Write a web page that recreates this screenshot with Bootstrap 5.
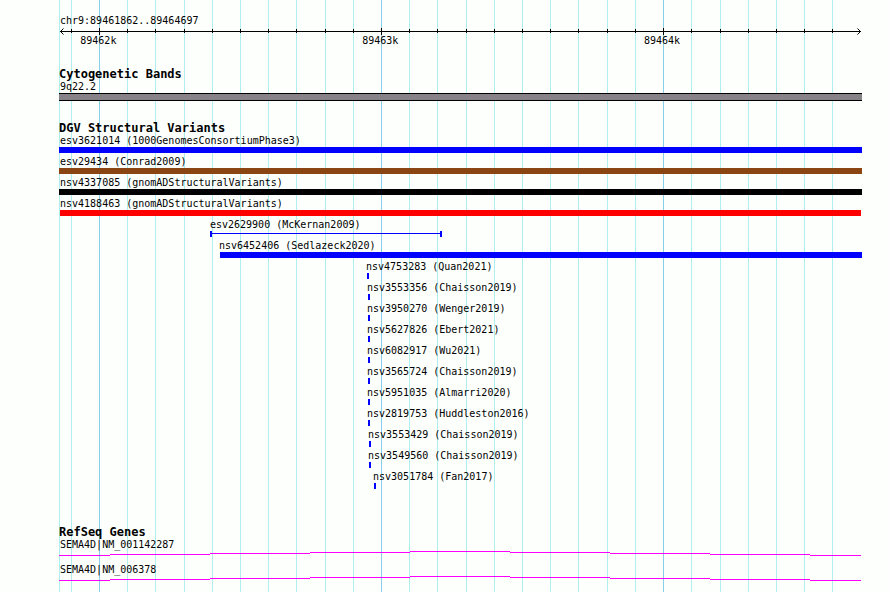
<!DOCTYPE html>
<html lang="en">
<head>
<meta charset="utf-8">
<meta name="viewport" content="width=device-width, initial-scale=1">
<title>chr9:89461862..89464697</title>
<link href="https://cdn.jsdelivr.net/npm/bootstrap@5.3.0/dist/css/bootstrap.min.css" rel="stylesheet">
<style>
body { background: #fdfffc; color: #000; font: 10px/13px "DejaVu Sans Mono", "Liberation Mono", monospace; }
.browser { padding: 14px 28px 0 59px; }
.gridlines { left: 59px; width: calc(100% - 87px); fill: #afeeee; z-index: -1; }
.gridlines .major { fill: #87ceeb; }
.region, .flush { padding-left: 1px; }
.ruler { height: 8px; }
.scale { line-height: 11px; }
.scale span { width: 40px; margin-left: calc(var(--at) - 20px); grid-area: 1 / 1; text-align: center; }
.track-title { font-size: 12px; line-height: 12px; font-weight: 700; margin: 0; }
.band-track { margin-top: 22px; }
.variant-track { margin-top: 21px; }
.gene-track { margin-top: 37px; }
.band { height: 8px; background: #878287; border: solid #000; border-width: 1px 0; }
.variant { margin-left: var(--from, 0%); margin-bottom: 2px; }
.inset { margin-left: -1px; }
.glyph { height: 6px; background: var(--ink, #00f); }
.brown { --ink: #8b4513; }
.black { --ink: #000; }
.red { --ink: #f00; margin: 0 1px; }
.tick { width: 2px; }
.span-glyph { width: var(--len); background: linear-gradient(#00f, #00f) 0 2px / 100% 1px no-repeat; border: solid #00f; border-width: 0 2px; }
.gene { margin-bottom: 7px; }
.gene svg { height: 5px; fill: #f0f; }
svg { display: block; }
</style>
<script src="https://cdn.jsdelivr.net/npm/bootstrap@5.3.0/dist/js/bootstrap.bundle.min.js"></script>
</head>
<body>
<main class="browser position-relative min-vh-100 overflow-hidden z-0">
<svg class="gridlines position-absolute top-0 h-100" viewBox="0 0 803 592" preserveAspectRatio="none" shape-rendering="crispEdges" aria-hidden="true">
<path d="M0 0h1v592h-1zM12 0h1v592h-1zM68 0h1v592h-1zM96 0h1v592h-1zM125 0h1v592h-1zM153 0h1v592h-1zM181 0h1v592h-1zM209 0h1v592h-1zM237 0h1v592h-1zM266 0h1v592h-1zM294 0h1v592h-1zM350 0h1v592h-1zM378 0h1v592h-1zM407 0h1v592h-1zM435 0h1v592h-1zM463 0h1v592h-1zM491 0h1v592h-1zM519 0h1v592h-1zM548 0h1v592h-1zM576 0h1v592h-1zM632 0h1v592h-1zM661 0h1v592h-1zM689 0h1v592h-1zM717 0h1v592h-1zM745 0h1v592h-1zM773 0h1v592h-1z"/>
<path class="major" d="M40 0h1v592h-1zM322 0h1v592h-1zM604 0h1v592h-1z"/>
</svg>

<header>
<div class="region">chr9:89461862..89464697</div>
<svg class="ruler w-100" viewBox="0 0 803 8" preserveAspectRatio="none" aria-hidden="true">
<path d="M1 4h801v1H1zM12 2h1v4h-1zM68 2h1v4h-1zM96 2h1v4h-1zM125 2h1v4h-1zM153 2h1v4h-1zM181 2h1v4h-1zM209 2h1v4h-1zM237 2h1v4h-1zM266 2h1v4h-1zM294 2h1v4h-1zM350 2h1v4h-1zM378 2h1v4h-1zM407 2h1v4h-1zM435 2h1v4h-1zM463 2h1v4h-1zM491 2h1v4h-1zM519 2h1v4h-1zM548 2h1v4h-1zM576 2h1v4h-1zM632 2h1v4h-1zM661 2h1v4h-1zM689 2h1v4h-1zM717 2h1v4h-1zM745 2h1v4h-1zM773 2h1v4h-1zM40 1h1v7h-1zM322 1h1v7h-1zM604 1h1v7h-1z"/>
<path d="M4.500 1.500L1.500 4.500L4.500 7.500M798.500 1.500L801.500 4.500L798.500 7.500" fill="none" stroke="#000"/>
</svg>
<div class="scale d-grid">
<span style="--at:4.9%">89462k</span><span style="--at:40%">89463k</span><span style="--at:75.1%">89464k</span>
</div>
</header>

<section class="band-track">
<h2 class="track-title">Cytogenetic Bands</h2>
<div class="flush">9q22.2</div>
<div class="band"></div>
</section>

<section class="variant-track">
<h2 class="track-title">DGV Structural Variants</h2>
<div>
<div class="variant"><div class="flush">esv3621014 (1000GenomesConsortiumPhase3)</div><div class="glyph"></div></div>
<div class="variant"><div class="flush">esv29434 (Conrad2009)</div><div class="glyph brown"></div></div>
<div class="variant"><div class="flush">nsv4337085 (gnomADStructuralVariants)</div><div class="glyph black"></div></div>
<div class="variant"><div class="flush">nsv4188463 (gnomADStructuralVariants)</div><div class="glyph red"></div></div>
<div class="variant" style="--from:18.8%;--len:35.6%"><div>esv2629900 (McKernan2009)</div><div class="glyph span-glyph"></div></div>
<div class="variant" style="--from:20.05%"><div class="inset">nsv6452406 (Sedlazeck2020)</div><div class="glyph"></div></div>
<div class="variant" style="--from:38.36%"><div class="inset">nsv4753283 (Quan2021)</div><div class="glyph tick"></div></div>
<div class="variant" style="--from:38.48%"><div class="inset">nsv3553356 (Chaisson2019)</div><div class="glyph tick"></div></div>
<div class="variant" style="--from:38.48%"><div class="inset">nsv3950270 (Wenger2019)</div><div class="glyph tick"></div></div>
<div class="variant" style="--from:38.48%"><div class="inset">nsv5627826 (Ebert2021)</div><div class="glyph tick"></div></div>
<div class="variant" style="--from:38.48%"><div class="inset">nsv6082917 (Wu2021)</div><div class="glyph tick"></div></div>
<div class="variant" style="--from:38.48%"><div class="inset">nsv3565724 (Chaisson2019)</div><div class="glyph tick"></div></div>
<div class="variant" style="--from:38.48%"><div class="inset">nsv5951035 (Almarri2020)</div><div class="glyph tick"></div></div>
<div class="variant" style="--from:38.48%"><div class="inset">nsv2819753 (Huddleston2016)</div><div class="glyph tick"></div></div>
<div class="variant" style="--from:38.61%"><div class="inset">nsv3553429 (Chaisson2019)</div><div class="glyph tick"></div></div>
<div class="variant" style="--from:38.61%"><div class="inset">nsv3549560 (Chaisson2019)</div><div class="glyph tick"></div></div>
<div class="variant" style="--from:39.23%"><div class="inset">nsv3051784 (Fan2017)</div><div class="glyph tick"></div></div>
</div>
</section>

<section class="gene-track">
<h2 class="track-title">RefSeq Genes</h2>
<div class="gene"><div class="flush">SEMA4D|NM_001142287</div>
<svg class="w-100" viewBox="0 0 803 5" preserveAspectRatio="none" aria-hidden="true"><path d="M0 4h51v1H0zM51 3h100v1H51zM151 2h100v1H151zM251 1h100v1H251zM351 0h100v1H351zM451 1h100v1H451zM551 2h100v1H551zM651 3h100v1H651zM751 4h51v1H751z"/></svg></div>
<div class="gene"><div class="flush">SEMA4D|NM_006378</div>
<svg class="w-100" viewBox="0 0 803 5" preserveAspectRatio="none" aria-hidden="true"><path d="M0 4h51v1H0zM51 3h100v1H51zM151 2h100v1H151zM251 1h100v1H251zM351 0h100v1H351zM451 1h100v1H451zM551 2h100v1H551zM651 3h100v1H651zM751 4h51v1H751z"/></svg></div>
</section>
</main>
</body>
</html>
